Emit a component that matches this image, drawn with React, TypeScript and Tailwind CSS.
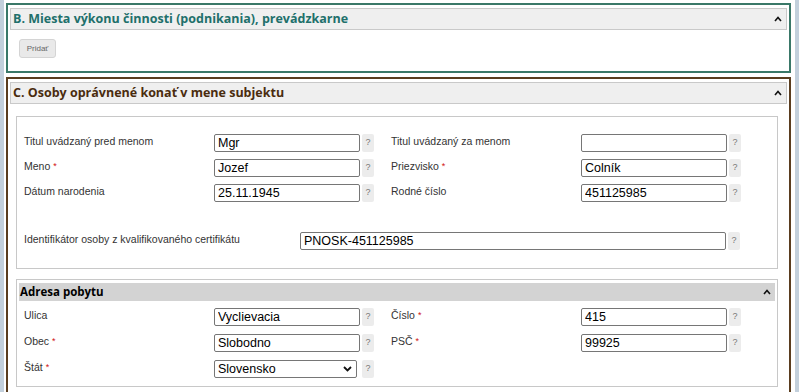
import React from "react";

const HEAD = { fontFamily: '"Open Sans", "DejaVu Sans", sans-serif' };
const BODY = { fontFamily: '"Liberation Sans", Arial, sans-serif' };

function Caret() {
  return (
    <svg width="8" height="6" viewBox="0 0 8 6" className="shrink-0">
      <polyline points="1,5 4,1.5 7,5" fill="none" stroke="#111" strokeWidth="1.6" />
    </svg>
  );
}

function Req() {
  return <span className="ml-[3px] text-[9px] text-[#d01010] align-[1px]">*</span>;
}

function Help() {
  return (
    <span className="ml-[2px] flex h-[18px] w-[12px] shrink-0 items-center justify-center rounded-[2px] bg-[#ececec] text-[9px] text-[#777]">
      ?
    </span>
  );
}

function Input({ value, w = "w-[146px]" }: { value: string; w?: string }) {
  return (
    <input
      readOnly
      value={value}
      className={`${w} h-[18px] shrink-0 rounded-[2px] border border-[#767676] bg-white px-[3px] text-[12.5px] leading-[16px] text-black outline-none`}
    />
  );
}

function Select({ value }: { value: string }) {
  return (
    <div className="flex h-[18px] w-[143px] shrink-0 items-center justify-between rounded-[2px] border border-[#767676] bg-white pl-[3px] pr-[4px] text-[12.5px] text-black">
      <span>{value}</span>
      <svg width="9" height="6" viewBox="0 0 9 6">
        <polyline points="1,1 4.5,4.5 8,1" fill="none" stroke="#111" strokeWidth="1.8" />
      </svg>
    </div>
  );
}

type F = { label: string; value?: string; req?: boolean; select?: boolean };

function Field({ label, value = "", req, select }: F) {
  return (
    <div className="flex items-start">
      <div className="w-[190px] shrink-0 text-[10.5px] leading-[14px] text-[#333]">
        {label}
        {req && <Req />}
      </div>
      {select ? <Select value={value} /> : <Input value={value} />}
      {select && <span className="w-[3px]" />}
      <Help />
    </div>
  );
}

const PERSON: F[] = [
  { label: "Titul uvádzaný pred menom", value: "Mgr" },
  { label: "Titul uvádzaný za menom", value: "" },
  { label: "Meno", value: "Jozef", req: true },
  { label: "Priezvisko", value: "Colník", req: true },
  { label: "Dátum narodenia", value: "25.11.1945" },
  { label: "Rodné číslo", value: "451125985" },
];

const ADDRESS: F[] = [
  { label: "Ulica", value: "Vyclievacia" },
  { label: "Číslo", value: "415", req: true },
  { label: "Obec", value: "Slobodno", req: true },
  { label: "PSČ", value: "99925", req: true },
  { label: "Štát", value: "Slovensko", req: true, select: true },
];

function SectionHeader({ title, color }: { title: string; color: string }) {
  return (
    <div className="flex h-[22px] items-center justify-between border border-[#c9c9c9] bg-[#efefef] pl-[2px] pr-[4px]">
      <span className="text-[12.5px] font-bold" style={{ ...HEAD, color }}>
        {title}
      </span>
      <Caret />
    </div>
  );
}

export default function App() {
  return (
    <div className="flex h-[392px] w-[799px] overflow-hidden bg-white" style={BODY}>
      <div className="w-[4px] shrink-0 bg-[#c3d0dc]" />
      <div className="w-[787px] shrink-0 pl-[2px] pt-[3px]">
        {/* B */}
        <div className="h-[70px] border-2 border-[#3a7868] px-[2px] pt-[3px]">
          <SectionHeader title="B. Miesta výkonu činnosti (podnikania), prevádzkarne" color="#21706b" />
          <button className="ml-[9px] mt-[9px] h-[19px] w-[37px] rounded-[3px] border border-[#d4d4d4] bg-[#e9e9e9] text-[8px] text-[#666]">
            Pridať
          </button>
        </div>

        {/* C */}
        <div className="mt-[4px] h-[330px] border-2 border-[#5a3d1f] px-[2px] pt-[3px]">
          <SectionHeader title="C. Osoby oprávnené konať v mene subjektu" color="#4a2c0e" />

          <div className="ml-[6px] mr-[9px] mt-[12px] border border-[#c8c8c8] pb-[18px] pl-[7px] pt-[17px]">
            <div className="grid grid-cols-[367px_367px] gap-y-[7px]">
              {PERSON.map((f) => (
                <Field key={f.label} {...f} />
              ))}
            </div>
            <div className="mt-[30px] flex items-start">
              <div className="w-[276px] shrink-0 text-[10.5px] leading-[14px] text-[#333]">
                Identifikátor osoby z kvalifikovaného certifikátu
              </div>
              <Input value="PNOSK-451125985" w="w-[426px]" />
              <Help />
            </div>
          </div>

          <div className="ml-[6px] mr-[9px] mt-[10px] h-[108px] border border-[#c8c8c8] px-[2px] pt-[3px]">
            <div className="flex h-[18px] items-center justify-between bg-[#d3d3d3] pl-[1px] pr-[4px]">
              <span className="text-[11.5px] font-bold text-black" style={HEAD}>
                Adresa pobytu
              </span>
              <Caret />
            </div>
            <div className="mt-[7px] grid grid-cols-[367px_367px] gap-y-[8px] pl-[5px]">
              {ADDRESS.map((f) => (
                <Field key={f.label} {...f} />
              ))}
            </div>
          </div>
        </div>
      </div>
      <div className="w-[4px] shrink-0 bg-white" />
      <div className="flex-1 bg-[#c3d0dc]" />
    </div>
  );
}
